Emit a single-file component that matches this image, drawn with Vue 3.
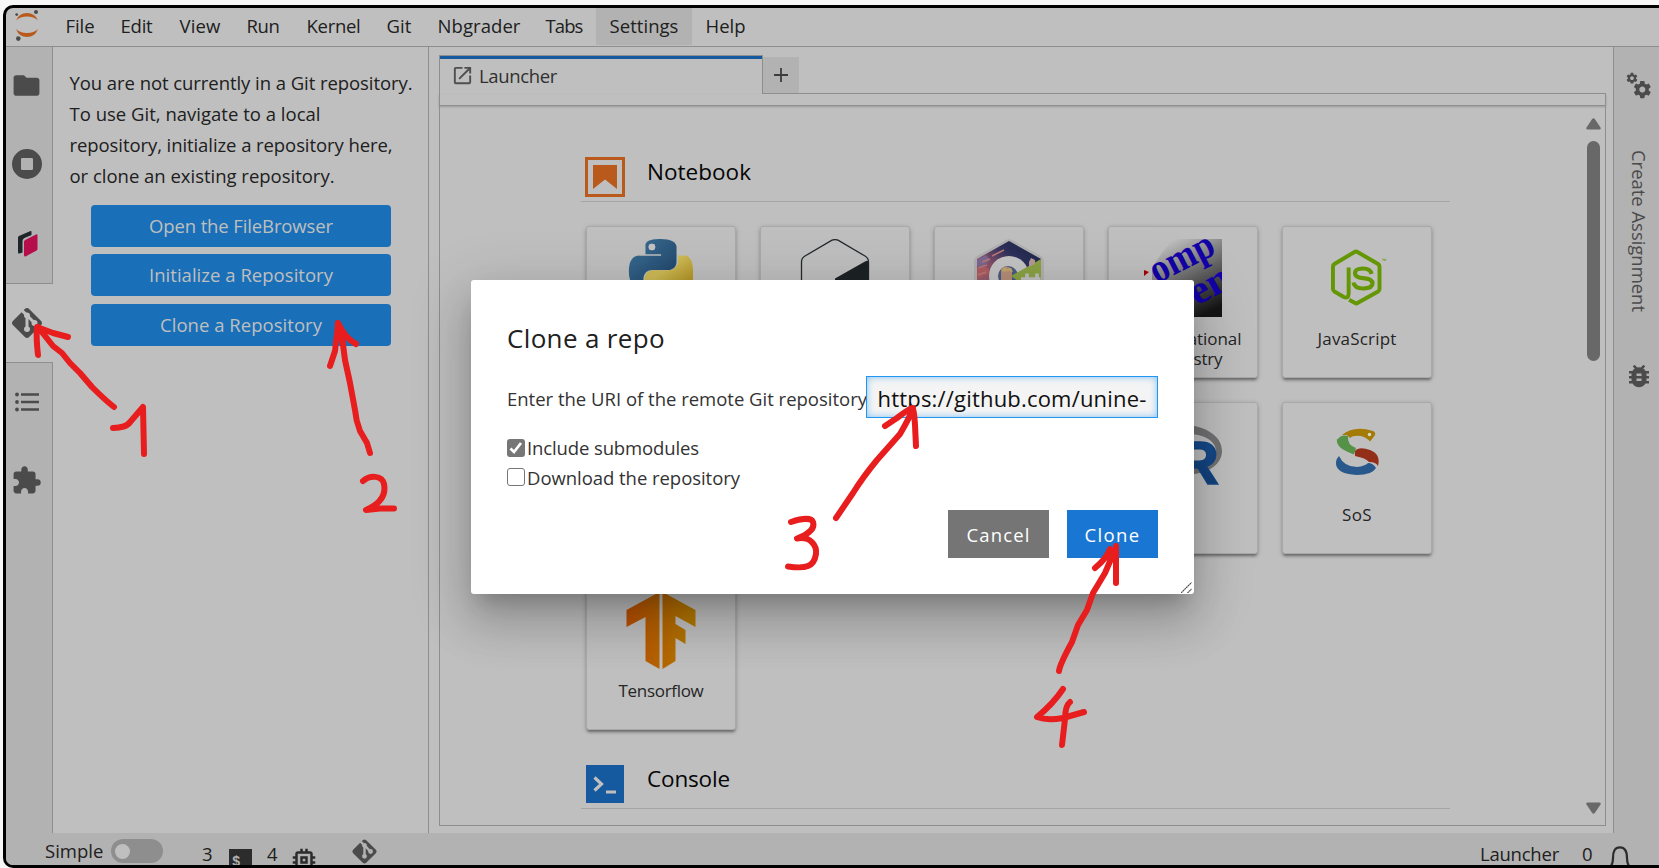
<script setup>
const fitTo = (el, { value, modifiers }) => {
  const box = el.getBoundingClientRect()
  const natural = modifiers.vertical ? box.height : box.width
  const count = el.textContent.trim().length
  el.style.letterSpacing = `${(value - natural) / count}px`
}
const vFit = { mounted: fitTo }

const menus = [
  { label: 'File', w: 29 }, { label: 'Edit', w: 32 }, { label: 'View', w: 41 },
  { label: 'Run', w: 33 }, { label: 'Kernel', w: 54 }, { label: 'Git', w: 25 },
  { label: 'Nbgrader', w: 83 }, { label: 'Tabs', w: 37 },
  { label: 'Settings', w: 69, active: true }, { label: 'Help', w: 40 },
]
const message = [
  { text: 'You are not currently in a Git repository.', w: 343 },
  { text: 'To use Git, navigate to a local', w: 251 },
  { text: 'repository, initialize a repository here,', w: 323 },
  { text: 'or clone an existing repository.', w: 265 },
]
const actions = [
  { text: 'Open the FileBrowser', w: 184 },
  { text: 'Initialize a Repository', w: 184 },
  { text: 'Clone a Repository', w: 162 },
]
const cards = [
  { icon: 'python', label: [] }, { icon: 'bash', label: [] }, { icon: 'cpp', label: [] },
  { icon: 'chem', label: [{ t: 'Computational', w: 117 }, { t: 'Chemistry', w: 79 }] },
  { icon: 'js', label: [{ t: 'JavaScript', w: 79 }] },
  { icon: '', label: [] }, { icon: '', label: [] }, { icon: '', label: [] },
  { icon: 'r', label: [] }, { icon: 'sos', label: [{ t: 'SoS', w: 30 }] },
  { icon: 'tf', label: [{ t: 'Tensorflow', w: 85 }] },
]
const gitPath = 'M2.6 10.59L8.38 4.8l1.69 1.7c-.24.85.15 1.78.93 2.23v5.54c-.6.34-1 .99-1 1.73a2 2 0 0 0 2 2 2 2 0 0 0 2-2c0-.74-.4-1.39-1-1.73V9.41l2.07 2.09c-.07.15-.07.32-.07.5a2 2 0 0 0 2 2 2 2 0 0 0 2-2 2 2 0 0 0-2-2c-.18 0-.35 0-.5.07L13.93 7.5a1.98 1.98 0 0 0-1.15-2.34c-.43-.16-.88-.2-1.28-.09L9.8 3.38l.79-.78c.78-.79 2.04-.79 2.82 0l7.99 7.99c.79.78.79 2.04 0 2.82l-7.99 7.99c-.78.79-2.04.79-2.82 0L2.6 13.41c-.79-.78-.79-2.04 0-2.82z'
const gearPath = 'M19.43 12.98c.04-.32.07-.64.07-.98s-.03-.66-.07-.98l2.11-1.65c.19-.15.24-.42.12-.64l-2-3.46c-.12-.22-.39-.3-.61-.22l-2.49 1c-.52-.4-1.08-.73-1.69-.98l-.38-2.65C14.46 2.18 14.25 2 14 2h-4c-.25 0-.46.18-.49.42l-.38 2.65c-.61.25-1.17.59-1.69.98l-2.49-1c-.23-.09-.49 0-.61.22l-2 3.46c-.13.22-.07.49.12.64l2.11 1.65c-.04.32-.07.65-.07.98s.03.66.07.98l-2.11 1.65c-.19.15-.24.42-.12.64l2 3.46c.12.22.39.3.61.22l2.49-1c.52.4 1.08.73 1.69.98l.38 2.65c.03.24.24.42.49.42h4c.25 0 .46-.18.49-.42l.38-2.65c.61-.25 1.17-.59 1.69-.98l2.49 1c.23.09.49 0 .61-.22l2-3.46c.12-.22.07-.49-.12-.64l-2.11-1.65zM12 15.5c-1.93 0-3.5-1.57-3.5-3.5s1.57-3.5 3.5-3.5 3.5 1.57 3.5 3.5-1.57 3.5-3.5 3.5z'
</script>

<template>
  <div class="page">
    <div class="window">
      <header class="menubar">
        <svg class="logo" width="24" height="32" viewBox="15 9 24 32">
          <path d="M16 20.5Q19 13 27 13T38 20.5Q34 16.6 27 16.6T16 20.5zM16 29Q19 37 27 37T38 29Q34 33 27 33T16 29z" fill="#b9591c" />
          <g fill="#4b4b4b"><circle cx="16.7" cy="14.6" r="1.4" /><circle cx="36" cy="12" r="2" /><circle cx="18.3" cy="38.6" r="2.3" /></g>
        </svg>
        <nav>
          <div v-for="m in menus" :key="m.label" class="menu" :class="{ active: m.active }"><span v-fit="m.w">{{ m.label }}</span></div>
        </nav>
      </header>

      <div class="workspace">
        <aside class="rail left-rail">
          <div class="slot"><svg width="31" height="31" viewBox="0 0 24 24"><path d="M10 4H4c-1.1 0-2 .9-2 2v12c0 1.1.9 2 2 2h16c1.1 0 2-.9 2-2V8c0-1.1-.9-2-2-2h-8z" /></svg></div>
          <div class="slot"><svg width="36" height="36" viewBox="0 0 24 24"><path fill-rule="evenodd" d="M12 2a10 10 0 1 0 0 20 10 10 0 0 0 0-20zM8.8 8h6.4q.8 0 .8.8v6.4q0 .8-.8.8H8.8q-.8 0-.8-.8V8.800q0-.8.8-.8z" /></svg></div>
          <div class="slot book"><svg width="20" height="26" viewBox="0 0 20 26"><path d="M0 6.500q0-1 .9-1.500L12 .2q1.500-.6 1.500.6V4L6.500 7q-2 1-2 2.800v11.700l-3 .9Q0 22.800 0 21.500z" fill="#1e252b" /><path d="M6 11q0-1.400 1.200-2L18 3.500q1.500-.6 1.500.9V18q0 1-.9 1.500L8 25.200Q6 26 6 24z" fill="#b60d4b" /></svg></div>
          <div class="slot current"><svg width="36" height="36" viewBox="0 0 24 24"><path :d="gitPath" /></svg></div>
          <div class="slot"><svg width="24" height="20" viewBox="0 0 24 20"><path d="M6 1.200h18v2.500H6zM6 8.700h18v2.500H6zM6 16.200h18v2.500H6z" /><circle cx="2" cy="2.500" r="1.900" /><circle cx="2" cy="10" r="1.900" /><circle cx="2" cy="17.500" r="1.900" /></svg></div>
          <div class="slot"><svg width="31" height="31" viewBox="0 0 24 24"><path d="M20.5 11H19V7c0-1.100-.9-2-2-2h-4V3.500C13 2.120 11.880 1 10.500 1S8 2.120 8 3.500V5H4c-1.100 0-1.990.9-1.990 2v3.800H3.500c1.490 0 2.700 1.210 2.700 2.700s-1.210 2.700-2.700 2.700H2V20c0 1.100.9 2 2 2h3.800v-1.500c0-1.490 1.210-2.700 2.700-2.700s2.700 1.210 2.700 2.700V22H17c1.100 0 2-.9 2-2v-4h1.500a2.500 2.500 0 0 0 0-5z" /></svg></div>
        </aside>

        <section class="git-panel">
          <p class="message"><span v-for="l in message" :key="l.text" class="line"><span v-fit="l.w">{{ l.text }}</span></span></p>
          <div class="actions">
            <button v-for="a in actions" :key="a.text"><span v-fit="a.w">{{ a.text }}</span></button>
          </div>
        </section>

        <main class="dock">
          <div class="tabs">
            <div class="tab">
              <svg width="23" height="23" viewBox="0 0 24 24"><path fill="#4f4f4f" d="M19 19H5V5h7V3H5a2 2 0 0 0-2 2v14a2 2 0 0 0 2 2h14c1.100 0 2-.9 2-2v-7h-2v7zM14 3v2h3.590l-9.830 9.830 1.410 1.410L19 6.410V10h2V3h-7z" /></svg>
              <span v-fit="78">Launcher</span>
            </div>
            <div class="tab-rest">
              <div class="add"><svg width="14" height="14" viewBox="0 0 14 14"><path d="M7 0v14M0 7h14" stroke="#3c3c3c" stroke-width="1.800" /></svg></div>
            </div>
          </div>
          <div class="toolbar"></div>
          <div class="launcher">
            <div class="launcher-content">
              <div class="section-head first">
                <svg class="nb-icon" width="40" height="40" viewBox="0 0 40 40"><path d="M1.500 1.500h37v37h-37z" fill="none" stroke="#b9591c" stroke-width="3" /><path d="M8 8h24v24l-12-9.500L8 32z" fill="#b9591c" /></svg>
                <h2><span v-fit="104">Notebook</span></h2>
              </div>
              <div class="cards">
                <div v-for="(c, i) in cards" :key="i" class="card">
                  <svg width="78" height="78" viewBox="0 0 78 78">
                    <defs>
                      <linearGradient id="blue" x1="0" y1="0" x2="1" y2="1"><stop offset="0" stop-color="#3d7199" /><stop offset="1" stop-color="#1d4062" /></linearGradient>
                      <linearGradient id="yellow" x1="0" y1="0" x2="1" y2="1"><stop offset="0.400" stop-color="#cdba55" /><stop offset="1" stop-color="#a88410" /></linearGradient>
                      <linearGradient id="chem" x1="0.200" y1="0" x2="0.700" y2="1"><stop offset="0.050" stop-color="#bfbfbf" /><stop offset="0.550" stop-color="#626262" /><stop offset="1" stop-color="#151515" /></linearGradient>
                      <linearGradient id="sky" x1="0.200" y1="1" x2="0.800" y2="0"><stop offset="0" stop-color="#a66a75" /><stop offset="0.500" stop-color="#8a5268" /><stop offset="0.750" stop-color="#2d305c" /><stop offset="1" stop-color="#1c2445" /></linearGradient>
                      <linearGradient id="flow" gradientUnits="userSpaceOnUse" x1="0" y1="0" x2="69" y2="0"><stop offset="0" stop-color="#b94f00" /><stop offset="1" stop-color="#b27a00" /></linearGradient>
                      <linearGradient id="rblue" x1="0" y1="0" x2="0" y2="1"><stop offset="0" stop-color="#184f94" /><stop offset="1" stop-color="#113d74" /></linearGradient>
                    </defs>
                    <g v-if="c.icon === 'python'" transform="translate(7 0) scale(2.667)">
                      <path fill="url(#yellow)" d="M18.400 6.150h2.700c1.900.3 2.900 2.400 2.900 6v2c0 3-1 6-3 6H5.800v-5c0-2 1.600-3.400 3.200-3.400h5.800c2 0 3.600-1.700 3.600-3.400z" />
                      <path fill="url(#blue)" d="M14.250.18l.9.2.73.26.59.3.45.32.34.34.25.34.16.33.1.3.04.26.02.2-.01.13V8.500l-.05.63-.13.55-.21.46-.26.38-.3.31-.33.25-.35.19-.35.14-.33.1-.3.07-.26.04-.21.02H8.770l-.69.05-.59.14-.5.22-.41.27-.33.32-.27.35-.2.36-.15.37-.1.35-.07.32-.04.27-.02.21v3.060H3.170l-.21-.03-.28-.07-.32-.12-.35-.18-.36-.26-.36-.36-.35-.46-.32-.59-.28-.73-.21-.88-.14-1.050-.05-1.230.06-1.220.16-1.040.24-.87.32-.71.36-.57.4-.44.42-.33.42-.24.4-.16.36-.1.32-.05.24-.01h.16l.06.01h8.160v-.500H6.180l-.01-3.080-.02-.37.05-.34.11-.31.17-.28.25-.26.31-.23.38-.2.44-.18.51-.15.58-.12.64-.1.71-.06.77-.04.84-.02 1.270.05zM8.600 1.750a1.230 1.230 0 1 0 0 2.460 1.230 1.230 0 0 0 0-2.460z" />
                      <circle cx="8.600" cy="3" r="1.230" fill="#c4c4c4" />
                    </g>
                    <g v-else-if="c.icon === 'bash'">
                      <path d="M36 1.200Q39 0 42 1.200L69 17Q72.500 19 72.500 23V57Q72 60 69 62L42 77H36L9 62Q5.500 60 5.500 56V23Q5.500 19 9 17z" fill="none" stroke="#242a2d" stroke-width="1.300" />
                      <path d="M69 22.500q3.500-2 3.500 1.500v33q0 3-3 5L42 77h-3V39.500z" fill="#1d2225" />
                    </g>
                    <g v-else-if="c.icon === 'cpp'">
                      <path d="M36 1Q39 -.500 42 1L71 17Q74 19 74 22v37L39 78 4 59V22Q4 19 7 17z" fill="#b0b0b0" />
                      <path d="M39 2L71 20v38L39 76 7 58V20z" fill="url(#sky)" />
                      <path d="M7 30q6-5 12 0v5l-12 5z" fill="#ad5c60" /><path d="M7 21l9-5 4 5-8 7-5-1z" fill="#7b6791" /><path d="M8 29l9-3M8 36l8-3M22 17l12-6M12 23l8-3" stroke="#b77777" stroke-width="1.500" />
                      <circle cx="39" cy="37" r="20" fill="#c4c4c4" /><circle cx="38" cy="37" r="10" fill="#4a5c80" />
                      <path d="M31 30q5-5 11 0v12H31z" fill="#b58e78" /><path d="M32 31l2-3 3 2 4-1 2 4-5-1-5 1z" fill="#bfa76c" />
                      <path d="M71 20v38L41 37z" fill="#8aa243" /><path d="M59 23l2-4 4 2v4l-6 3z" fill="#b39a94" />
                      <path d="M57 34.500v13M51 40h11M67 34.500v13M62 40h8.500" stroke="#bfbfbf" stroke-width="3.600" />
                    </g>
                    <g v-else-if="c.icon === 'chem'">
                      <path d="M28 0h50v78H8V28z" fill="url(#chem)" /><path d="M0 31l5 2-5 4z" fill="#a80000" />
                      <g class="chem-word"><text transform="translate(13 45) rotate(-27)" textLength="68" lengthAdjust="spacingAndGlyphs">omp</text><text transform="translate(53 67) rotate(-29)" textLength="54" lengthAdjust="spacingAndGlyphs">em</text></g>
                    </g>
                    <g v-else-if="c.icon === 'js'" fill="none" stroke="#659603" transform="translate(0 -1)">
                      <path d="M26.500 30.500v26q0 5.500-5 3.500L12 54.500Q10.500 53.500 10.500 52V29.500Q10.500 28 12 27L32.500 15q1.500-1 3 0L56.500 27q1.500 1 1.500 2.500V52q0 1.500-1.500 2.500L35.500 66q-1 .7-2 .2L27 62.800" transform="translate(4 -1) translate(34 40) scale(.98 1) translate(-34 -40)" stroke-width="4" />
                      <path d="M52 36.500q-1-5.500-8.500-5.500-8 0-8 4.500t8 5.200q9.500.8 9.500 5.300t-9 5q-9 0-10-6" transform="translate(1.500 -.500)" stroke-width="4.200" />
                      <text x="64" y="25" class="tm">™</text>
                    </g>
                    <g v-else-if="c.icon === 'r'">
                      <path fill-rule="evenodd" d="M39 10c22 0 39 11 39 26S61 60 39 60 0 50 0 36s17-26 39-26zm5 9C28 19 14 26 14 36s14 16 30 16 28-6 28-16-12-17-28-17z" fill="#727275" />
                      <text x="31" y="69" class="r-mark" textLength="44" lengthAdjust="spacingAndGlyphs">R</text>
                    </g>
                    <g v-else-if="c.icon === 'sos'" fill="none" transform="translate(0 -2)">
                      <path d="M24 22q12-10 31-4 4 2 1 5.500l-4 5q-3-4-9-5.500-8-1-11 2l-3-3z" fill="#a47b05" /><circle cx="51.500" cy="21.500" r="1.700" fill="#d8d8d8" />
                      <path d="M20 26q3-5 10-3-1 9 8 12l-2 6.500Q17 35 19 26z" fill="#559247" />
                      <path d="M37 38q4-5 15-1 11 4 8 16-2-4-9-4-3-4-14-6z" fill="#932f19" />
                      <path d="M21 43q5 11 18 11 8-1 11-4 5 0 8 5-4 7-19 7-22-1-21-13 0-3 3-6z" fill="#29598c" />
                    </g>
                    <g v-else-if="c.icon === 'tf'" transform="translate(4.500 -1)" fill="url(#flow)">
                      <path d="M33 2L0 20v17l19-10v44l14 8z" /><path d="M36 2l33 18v17L49 26v8l10 6v14l-10-6v23l-13 8V2z" />
                    </g>
                  </svg>
                  <div class="label"><span v-for="l in c.label" :key="l.t" class="label-line"><span v-fit="l.w">{{ l.t }}</span></span></div>
                </div>
              </div>
              <div class="section-head">
                <svg class="console-icon" width="38" height="38" viewBox="0 0 38 38"><path d="M0 0h38v38H0z" fill="#155a9e" /><path d="M8.500 12.500l7 6.500-7 6.500" fill="none" stroke="#bfbfbf" stroke-width="3.200" /><path d="M20 25.500h10v3H20z" fill="#bfbfbf" /></svg>
                <h2><span v-fit="83">Console</span></h2>
              </div>
            </div>
            <div class="scrollbar">
              <svg width="15" height="12" viewBox="0 0 15 12"><path d="M6.200 1q1.300-1.500 2.600 0L14.500 9.500q.8 2-1.200 2H1.700q-2 0-1.200-2z" fill="#686868" /></svg>
              <div class="thumb"></div>
              <svg class="down" width="15" height="12" viewBox="0 0 15 12"><path d="M6.200 11q1.300 1.500 2.600 0L14.500 2.500q.8-2-1.200-2H1.700q-2 0-1.200 2z" fill="#686868" /></svg>
            </div>
          </div>
        </main>

        <aside class="rail right-rail">
          <svg class="gears" width="26" height="28" viewBox="0 0 26 28"><path :d="gearPath" transform="translate(6 7.300) scale(.86)" /><path :d="gearPath" transform="translate(-.500 -.300) scale(.54)" /></svg>
          <span v-fit.vertical="162" class="assignment">Create Assignment</span>
          <svg class="bug" width="30" height="30" viewBox="0 0 24 24"><path d="M20 8h-2.810c-.45-.78-1.070-1.450-1.820-1.960L17 4.410 15.590 3l-2.170 2.170a6 6 0 0 0-2.830 0L8.410 3 7 4.410l1.620 1.630C7.880 6.550 7.260 7.220 6.810 8H4v2h2.090c-.05.33-.09.66-.09 1v1H4v2h2v1c0 .34.040.67.090 1H4v2h2.810a6 6 0 0 0 10.380 0H20v-2h-2.090c.05-.33.090-.66.090-1v-1h2v-2h-2v-1c0-.34-.04-.67-.09-1H20V8zm-6 8h-4v-2h4v2zm0-4h-4v-2h4v2z" /></svg>
        </aside>
      </div>

      <footer class="status">
        <span v-fit="59" class="simple">Simple</span>
        <span class="toggle"><i></i></span>
        <span v-fit="10" class="low terminals">3</span>
        <svg class="term" width="23" height="23" viewBox="0 0 23 23"><path d="M0 0h23v23H0z" fill="#2c2c2c" /><text x="3" y="17" class="dollar">$</text></svg>
        <span v-fit="10" class="low kernels">4</span>
        <svg class="chip" width="30" height="30" viewBox="0 0 24 24"><path fill="#2c2c2c" d="M15 9H9v6h6V9zm-2 4h-2v-2h2v2zm8-2V9h-2V7c0-1.100-.9-2-2-2h-2V3h-2v2h-2V3H9v2H7c-1.100 0-2 .9-2 2v2H3v2h2v2H3v2h2v2c0 1.100.9 2 2 2h2v2h2v-2h2v2h2v-2h2c1.100 0 2-.9 2-2v-2h2v-2h-2v-2h2zm-4 6H7V7h10v10z" /></svg>
        <svg class="git" width="29" height="29" viewBox="0 0 24 24"><path :d="gitPath" fill="#4b4b4b" /></svg>
        <span v-fit="79" class="low where">Launcher</span>
        <span v-fit="10" class="low zero">0</span>
        <svg class="bell" width="20" height="24" viewBox="0 0 20 24"><path d="M1 20Q3 17 3 12C3 5 5 1.300 10 1.300S17 5 17 12q0 5 2 8" fill="none" stroke="#2c2c2c" stroke-width="2.200" /></svg>
      </footer>
    </div>

    <div class="dialog">
      <h1><span v-fit="158">Clone a repo</span></h1>
      <div class="field">
        <label><span v-fit="360">Enter the URI of the remote Git repository</span></label>
        <div class="input"><span v-fit="269">https://github.com/unine-</span></div>
      </div>
      <div class="check"><span class="box on"><svg width="18" height="18" viewBox="0 0 18 18"><path d="M3.500 9.500l3.500 3.500 7-9" fill="none" stroke="#fff" stroke-width="2.700" /></svg></span><span v-fit="172" class="check-text">Include submodules</span></div>
      <div class="check"><span class="box"></span><span v-fit="213" class="check-text">Download the repository</span></div>
      <div class="buttons">
        <button class="cancel"><span v-fit="64">Cancel</span></button>
        <button class="accept"><span v-fit="56">Clone</span></button>
      </div>
      <svg class="grip" width="11" height="11" viewBox="0 0 11 11"><path d="M0 11L10.500.500M6.500 11L10.500 7" stroke="#444" stroke-width="1.100" stroke-dasharray="2 .4" /></svg>
    </div>

    <svg class="ink" width="1659" height="868" viewBox="0 0 1659 868">
      <path d="M114 407Q105 400 92 387L80 373 70 363 62 353 53 346 38 327M68 337L53 333 37 327Q36 338 38 355" />
      <path d="M113 428C121 428 127 427 131 421L143 407 144 454" />
      <path d="M370 453L367 443 360 431Q356 421 355 410L350 383 345 360 342 337 338 323M330 366L335 351 337 334 338 323Q345 338 356 344" />
      <path d="M363 481C370 475 382 475 384 484 386 494 382 503 366 510L380 508.500H394" />
      <path d="M791 522C800 519 811 517 813 522 815 528 809 534 797 538.500 811 536 817 546 816 554 814 567 806 569 788 566.500" />
      <path d="M836 518L853 493Q863 477 877 460L900 434Q910 417 913 408M885 426L897 418Q910 408 912 408T915 425L916 446" />
      <path d="M1059 671Q1060 664 1072 642L1078 625 1087 610 1093 593 1105 573 1114 552M1095 568Q1107 558 1110 549M1116 546V583" />
      <path d="M1063 689Q1053 704 1037 717 1047 721 1063 718L1084 712M1070 702Q1065 706 1065 719L1062 745" />
    </svg>
  </div>
</template>

<style>
body { overflow: hidden; background: #f8f8f8; }
</style>

<style scoped>
* { box-sizing: border-box; }
.page { position: relative; width: 1659px; height: 868px; overflow: hidden; padding: 5px 0 0 3px; background: #f7f7f7; font: 18.500px "Open Sans", "Noto Sans", sans-serif; color: #202020; }
span { white-space: nowrap; }
svg { display: block; flex: none; }
p, h1, h2 { margin: 0; font-weight: 400; }
button { border: 0; padding: 0; font: inherit; }
.window { width: 1658px; height: 863px; display: flex; flex-direction: column; border: 3px solid #000; border-right: 0; border-radius: 10px 3px 3px 10px; background: #bfbfbf; overflow: hidden; }
.menubar { height: 39px; flex: none; display: flex; border-bottom: 1px solid #8e8e8e; }
.logo { margin: 1px 13px 0 9px; }
nav { display: grid; grid-template-columns: 55px 59px 67px 60px 80px 51px 108px 64px 96px 67px; }
.menu { height: 37px; padding-left: 13.500px; line-height: 35px; }
.menu span { display: inline-block; }
.menu.active { background: #b2b2b2; }
.workspace { height: 786px; flex: none; display: flex; }
.rail { background: #b2b2b2; }
.rail svg { fill: #4b4b4b; }
.left-rail { width: 47px; border-right: 1px solid #8e8e8e; }
.slot { height: 79px; display: flex; align-items: center; justify-content: center; padding: 0 5px 2px 0; }
.slot:first-child { height: 78px; }
.slot.book { padding: 0 2px 0 0; }
.slot.current { height: 80px; width: 47px; padding: 0 6px 1px 0; background: #bfbfbf; border-top: 1px solid #8e8e8e; border-bottom: 1px solid #8e8e8e; }
.git-panel { width: 376px; padding: 20px 0 0 16.500px; border-right: 1px solid #8e8e8e; }
.message { line-height: 31px; }
.line { display: block; }
.line span, .label-line span, h1 span, h2 span, label span { display: inline-block; }
.actions { width: 300px; margin: 14px 0 0 21.500px; display: grid; grid-auto-rows: 42px; gap: 7px; }
.actions button { height: 42px; border-radius: 4px; background: #1a70b8; color: #bfbfbf; line-height: 42px; }
.actions button:last-child { margin-top: 1px; }
.dock { width: 1167px; margin: 8px 7px 7px 10px; }
.tabs { height: 39px; display: flex; }
.tab { width: 324px; border: solid #8e8e8e; border-width: 1px 1px 0 1px; box-shadow: inset 0 3px #155a9e; display: flex; align-items: center; gap: 5px; padding: 1px 0 0 11px; color: #303030; }
.tab-rest { flex: 1; border-bottom: 1px solid #8e8e8e; padding-top: 2px; }
.add { width: 36px; height: 36px; background: #b2b2b2; display: grid; place-items: center; }
.toolbar { height: 12px; border: solid #8e8e8e; border-width: 0 1px 1px 1px; box-shadow: 0 1px 2px rgba(0,0,0,.2); }
.launcher { height: 720px; display: flex; justify-content: space-between; border: 1px solid #8e8e8e; border-top: 0; }
.launcher-content { width: 869px; margin-left: 141px; }
.section-head { height: 79px; display: flex; align-items: flex-end; border-bottom: 1px solid #a5a5a5; }
.section-head.first { height: 96px; }
.nb-icon { margin: 0 22px 4px 4px; }
.console-icon { margin: 0 23px 5px 5px; }
h2 { height: 30px; margin-bottom: 14px; font-size: 22.500px; line-height: 30px; color: #050505; }
.cards { display: grid; grid-template-columns: repeat(5, 150px); grid-auto-rows: 152px; gap: 24px; margin: 24px 0 0 5px; }
.card { border: 1px solid #a9a9a9; border-radius: 3px; padding-top: 12px; background: #bfbfbf; box-shadow: 0 3px 3px -1px rgba(0,0,0,.38), 0 1px 5px rgba(0,0,0,.18); display: flex; flex-direction: column; align-items: center; }
.label { margin-top: 12px; text-align: center; font-size: 17px; line-height: 20px; color: #252525; }
.label-line { display: block; }
.chem-word { fill: #1300a8; font: bold 40px "Liberation Serif", serif; }
.tm { font: 6px "Open Sans", sans-serif; fill: #659603; stroke: none; }
.r-mark { font: bold 62px "Liberation Sans", sans-serif; fill: url(#rblue); stroke: #154785; stroke-width: 1.500px; }
.scrollbar { width: 24px; padding: 12px 0 11px; display: flex; flex-direction: column; align-items: center; }
.thumb { width: 13px; height: 220px; margin-top: 11px; border-radius: 7px; background: #686868; }
.down { margin-top: auto; }
.right-rail { flex: 1; border-left: 1px solid #8e8e8e; display: flex; flex-direction: column; align-items: flex-start; }
.gears { margin: 25px 0 0 12px; }
.assignment { margin: 50px 0 0 12.500px; writing-mode: vertical-rl; line-height: 25px; color: #4b4b4b; }
.bug { margin: 49px 0 0 10px; }
.status { flex: 1; display: flex; align-items: flex-start; background: #b2b2b2; overflow: hidden; line-height: 26px; }
.simple { width: 59px; margin: 5px 7px 0 39px; }
.toggle { width: 52px; height: 24px; margin-top: 6px; border-radius: 12px; background: #8e8e8e; padding: 4.500px 4px; }
.toggle i { display: block; width: 15px; height: 15px; border-radius: 50%; background: #bfbfbf; }
.low { margin-top: 8px; }
.terminals { margin-left: 39px; }
.term { margin: 16px 15px 0 17px; }
.dollar { font: bold 14px "Liberation Mono", monospace; fill: #b2b2b2; }
.chip { margin: 12px 0 0 12px; }
.git { margin: 4px 0 0 31px; }
.where { margin-left: auto; }
.zero { margin-left: 23px; }
.bell { margin: 13px 31px 0 18px; }
.dialog { position: absolute; left: 471px; top: 280px; width: 723px; height: 314px; padding: 40px 36px 0; border-radius: 3px; background: #fff; box-shadow: 0 15px 20px -9px rgba(0,0,0,.2), 0 30px 46px 4px rgba(0,0,0,.14), 0 12px 57px 10px rgba(0,0,0,.12); color: #333; }
h1 { height: 36px; font-size: 26px; line-height: 36px; color: #202020; }
.field { display: flex; align-items: center; margin-top: 20px; }
label { width: 359px; height: 42px; padding-top: 2px; line-height: 42px; }
.input { width: 292px; height: 42px; padding-left: 10.500px; border: 1px solid #2196f3; background: #f4f4f4; box-shadow: inset 0 0 7px rgba(33,150,243,.55); font-size: 22px; line-height: 43px; color: #101010; overflow: hidden; }
.field + .check { margin-top: 17px; }
.check { height: 29.500px; display: flex; align-items: center; gap: 2px; }
.check-text { height: 29px; line-height: 25px; }
.box { width: 18px; height: 18px; margin-top: -4px; border: 1.500px solid #767676; border-radius: 3px; }
.box.on { background: #767676; border: 0; }
.buttons { display: flex; justify-content: flex-end; gap: 18px; margin-top: 16px; }
.buttons button { height: 48px; color: #fff; font-weight: 500; line-height: 49px; }
.cancel { width: 101px; background: #757575; }
.accept { width: 91px; background: #1976d2; }
.grip { position: absolute; right: 2px; bottom: 1px; }
.ink { position: absolute; left: 0; top: 0; fill: none; stroke: #e81d1d; stroke-width: 6; stroke-linecap: round; stroke-linejoin: round; pointer-events: none; }
</style>
